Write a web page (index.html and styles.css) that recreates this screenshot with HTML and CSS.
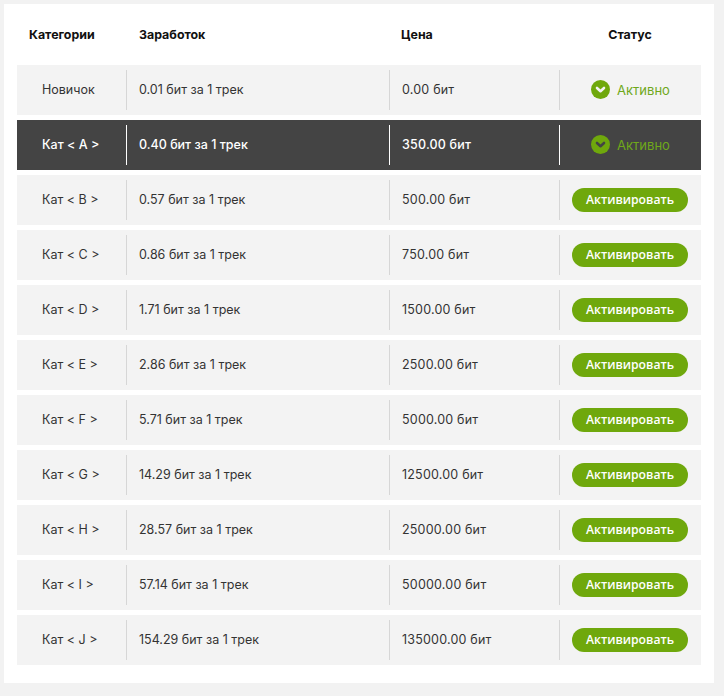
FILE: index.html
```html
<!DOCTYPE html>
<html lang="ru">
<head>
<meta charset="utf-8">
<title>Категории</title>
<link rel="stylesheet" href="styles.css">
</head>
<body>
<main class="panel">
  <div class="head">
    <div class="hc">Категории</div>
    <div class="hc hc-earn">Заработок</div>
    <div class="hc">Цена</div>
    <div class="hc hc-status">Статус</div>
  </div>
  <div class="rows">
    <div class="row">
      <div class="cell cell-cat">Новичок</div>
      <div class="cell">0.01 бит за 1 трек</div>
      <div class="cell cell-price">0.00 бит</div>
      <div class="cell cell-status"><span class="active"><svg class="ico" viewBox="0 0 19 19"><circle cx="9.5" cy="9.5" r="9.5"/><path d="M6 8l3.5 3.2L13 8" /></svg>Активно</span></div>
    </div>
    <div class="row row-current">
      <div class="cell cell-cat">Кат &lt; A &gt;</div>
      <div class="cell">0.40 бит за 1 трек</div>
      <div class="cell cell-price">350.00 бит</div>
      <div class="cell cell-status"><span class="active"><svg class="ico" viewBox="0 0 19 19"><circle cx="9.5" cy="9.5" r="9.5"/><path d="M6 8l3.5 3.2L13 8" /></svg>Активно</span></div>
    </div>
    <div class="row"><div class="cell cell-cat">Кат &lt; B &gt;</div><div class="cell">0.57 бит за 1 трек</div><div class="cell cell-price">500.00 бит</div><div class="cell cell-status"><button class="btn">Активировать</button></div></div>
    <div class="row"><div class="cell cell-cat">Кат &lt; C &gt;</div><div class="cell">0.86 бит за 1 трек</div><div class="cell cell-price">750.00 бит</div><div class="cell cell-status"><button class="btn">Активировать</button></div></div>
    <div class="row"><div class="cell cell-cat">Кат &lt; D &gt;</div><div class="cell">1.71 бит за 1 трек</div><div class="cell cell-price">1500.00 бит</div><div class="cell cell-status"><button class="btn">Активировать</button></div></div>
    <div class="row"><div class="cell cell-cat">Кат &lt; E &gt;</div><div class="cell">2.86 бит за 1 трек</div><div class="cell cell-price">2500.00 бит</div><div class="cell cell-status"><button class="btn">Активировать</button></div></div>
    <div class="row"><div class="cell cell-cat">Кат &lt; F &gt;</div><div class="cell">5.71 бит за 1 трек</div><div class="cell cell-price">5000.00 бит</div><div class="cell cell-status"><button class="btn">Активировать</button></div></div>
    <div class="row"><div class="cell cell-cat">Кат &lt; G &gt;</div><div class="cell">14.29 бит за 1 трек</div><div class="cell cell-price">12500.00 бит</div><div class="cell cell-status"><button class="btn">Активировать</button></div></div>
    <div class="row"><div class="cell cell-cat">Кат &lt; H &gt;</div><div class="cell">28.57 бит за 1 трек</div><div class="cell cell-price">25000.00 бит</div><div class="cell cell-status"><button class="btn">Активировать</button></div></div>
    <div class="row"><div class="cell cell-cat">Кат &lt; I &gt;</div><div class="cell">57.14 бит за 1 трек</div><div class="cell cell-price">50000.00 бит</div><div class="cell cell-status"><button class="btn">Активировать</button></div></div>
    <div class="row"><div class="cell cell-cat">Кат &lt; J &gt;</div><div class="cell">154.29 бит за 1 трек</div><div class="cell cell-price">135000.00 бит</div><div class="cell cell-status"><button class="btn">Активировать</button></div></div>
  </div>
</main>
</body>
</html>
```
FILE: styles.css
```css
* { box-sizing: border-box; }
html, body { margin: 0; height: 696px; overflow: hidden; }
body {
  background: #f2f2f2;
  padding: 4px 10px 13px 4px;
  font-family: "Inter", "Liberation Sans", sans-serif;
  font-size: 12.5px;
  color: #333;
}
.panel { background: #fff; padding: 0 13px 18px; height: 679px; }
.head, .row { display: grid; grid-template-columns: 109px 263px 170px 142px; }
.head { height: 61px; align-items: center; padding-bottom: 1px; font-weight: 700; color: #111; font-size: 12.4px; }
.hc { padding-left: 12px; }
.hc-earn { padding-left: 13px; }
.hc-status { padding-left: 0; text-align: center; }
.rows { display: flex; flex-direction: column; gap: 5px; }
.row { height: 50px; background: #f3f3f3; align-items: center; }
.cell { height: 40px; display: flex; align-items: center; padding: 0 0 1px 12px; border-left: 1px solid #d6d6d6; }
.cell-cat { border-left: 0; padding-left: 25px; }
.cell-price { letter-spacing: 0.2px; }
.cell-status { justify-content: center; padding-left: 0; }
.row-current { background: #444; color: #fff; font-weight: 500; }
.row-current .cell { border-left-color: #fff; }
.row-current .cell-cat { border-left: 0; }
.active { display: inline-flex; align-items: center; gap: 7px; font-size: 13px; color: #6fa81a; font-weight: 400; }
.ico { width: 19px; height: 19px; flex: none; }
.ico circle { fill: #6fa80c; }
.ico path { fill: none; stroke: #f3f3f3; stroke-width: 2.6; stroke-linecap: round; stroke-linejoin: round; }
.row-current .ico path { stroke: #444; }
.btn {
  width: 116px; height: 24px; border: 0; padding: 0; border-radius: 12px;
  margin-right: 1px;
  background: #6fa80c; color: #fff;
  font-family: "Open Sans", "Liberation Sans", sans-serif;
  font-size: 12.2px; font-weight: 600;
}
```
